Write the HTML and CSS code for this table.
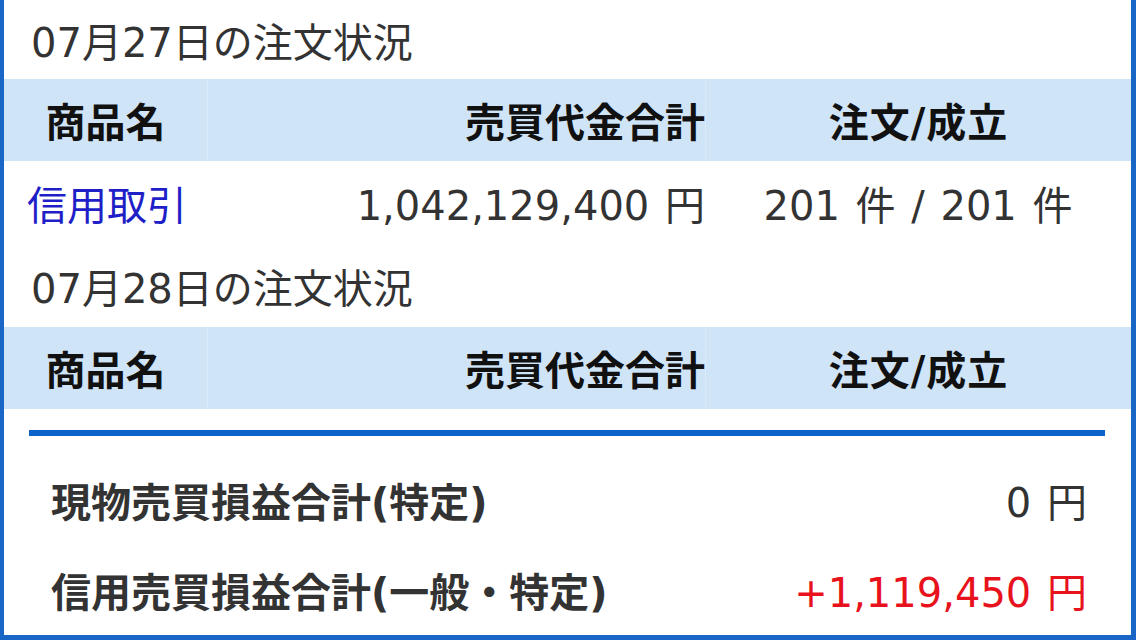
FILE: index.html
```html
<!DOCTYPE html>
<html lang="ja">
<head>
<meta charset="utf-8">
<link rel="stylesheet" href="styles.css">
</head>
<body>
<div class="panel">
  <div class="title title-first">07月27日の注文状況</div>
  <div class="grid head">
    <div class="cell c1">商品名</div>
    <div class="cell c2">売買代金合計</div>
    <div class="cell c3">注文/成立</div>
  </div>
  <div class="grid data">
    <div class="cell c1 link">信用取引</div>
    <div class="cell c2">1,042,129,400 円</div>
    <div class="cell c3">201 件 / 201 件</div>
  </div>
  <div class="title">07月28日の注文状況</div>
  <div class="grid head">
    <div class="cell c1">商品名</div>
    <div class="cell c2">売買代金合計</div>
    <div class="cell c3">注文/成立</div>
  </div>
  <div class="summary">
    <div class="rule"></div>
    <div class="sum-row">
      <span class="label">現物売買損益合計(特定)</span>
      <span class="value">0 円</span>
    </div>
    <div class="sum-row">
      <span class="label">信用売買損益合計(一般・特定)</span>
      <span class="value plus">+1,119,450 円</span>
    </div>
  </div>
</div>
</body>
</html>
```

FILE: styles.css
```css
html, body {
  margin: 0;
  padding: 0;
  background: #ffffff;
}
body {
  width: 1136px;
  height: 640px;
  overflow: hidden;
  font-family: "DejaVu Sans", "Noto Sans CJK JP", sans-serif;
  font-size: 40px;
  color: #333333;
}
.panel {
  box-sizing: border-box;
  width: 1136px;
  height: 640px;
  border-left: 4px solid #1a66c6;
  border-right: 5px solid #1a66c6;
  border-bottom: 5px solid #1a66c6;
  display: flex;
  flex-direction: column;
}
.title {
  height: 82px;
  display: flex;
  align-items: center;
  padding-left: 27px;
  color: #333333;
  white-space: nowrap;
}
.title-first {
  height: 79px;
}
.grid {
  display: grid;
  grid-template-columns: 203px 498px 1fr;
}
.head {
  height: 82px;
  background: #d0e4f7;
  font-weight: bold;
  color: #111111;
}
.head .cell + .cell {
  border-left: 1px solid #dbeafa;
}
.head .c3 {
  letter-spacing: 1px;
}
.data {
  height: 84px;
  word-spacing: 3px;
}
.cell {
  display: flex;
  align-items: center;
  white-space: nowrap;
}
.c1 {
  justify-content: center;
}
.c2 {
  justify-content: flex-end;
  padding-right: 0;
}
.c3 {
  justify-content: center;
}
.data .c1 {
  justify-content: flex-start;
  padding-left: 23px;
}
.link {
  color: #1f1fc8;
}
.summary {
  flex: 1;
  padding: 21px 26px 0 25px;
  display: flex;
  flex-direction: column;
}
.rule {
  height: 6px;
  background: #0c62c8;
  margin-bottom: 19px;
}
.sum-row {
  height: 90px;
  display: flex;
  align-items: center;
  justify-content: space-between;
  padding: 0 18px 0 22px;
  white-space: nowrap;
}
.label {
  font-weight: bold;
  color: #333333;
}
.value {
  color: #333333;
  word-spacing: 3px;
}
.plus {
  color: #e8121c;
}
```
